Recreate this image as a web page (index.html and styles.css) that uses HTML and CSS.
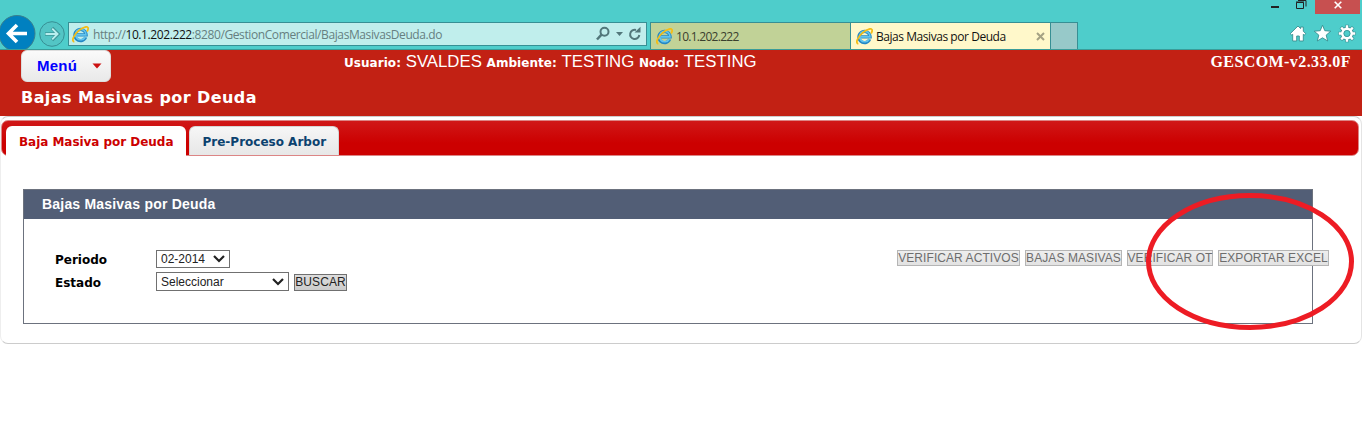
FILE: index.html
```html
<!DOCTYPE html>
<html lang="es">
<head>
<meta charset="utf-8">
<title>Bajas Masivas por Deuda</title>
<link rel="stylesheet" href="styles.css">
</head>
<body>
<svg class="defs" width="0" height="0" aria-hidden="true">
  <symbol id="ie" viewBox="0 0 16 16">
    <path d="M12.900 10.600A5.300 5.300 0 1 1 13.300 8.300H4.600" fill="none" stroke="#2387c4" stroke-width="3"/>
    <path d="M12.500 10.400A4.900 4.900 0 1 1 13.100 8.300H4.600" fill="none" stroke="#62c4ee" stroke-width="1.600"/>
    <path d="M2.200 14.900C-1 14.500 1.600 8 6.600 4.100 10.800.8 15-.3 15.200 2.100c.1 1-.4 2-1 3" fill="none" stroke="#f4bd16" stroke-width="1.700"/>
  </symbol>
</svg>
<header class="chrome">
  <div class="window-buttons">
    <svg class="win-icons" width="60" height="14" viewBox="0 0 60 14"><path d="M0 6h8v2H0z" fill="#222"/><path d="M25.500 2.500h7v6h-7zM25 2h8M27 .5h8v6" fill="none" stroke="#222"/></svg>
    <div class="win-close"><svg width="8" height="8" viewBox="0 0 8 8"><path d="M.7.7l6.600 6.600M7.300.7L.7 7.300" stroke="#fff" stroke-width="1.600"/></svg></div>
  </div>
  <div class="nav">
    <svg class="back" width="36" height="34" viewBox="0 0 36 34"><circle cx="17" cy="18.500" r="18" fill="#0080c0" stroke="#3a7f8c"/><path d="M27 18.500H9M17 10l-8.500 8.500L17 27" fill="none" stroke="#fff" stroke-width="3.600"/></svg>
    <svg class="forward" width="28" height="28" viewBox="0 0 28 28"><circle cx="14" cy="14" r="12.300" fill="#53c5c5" stroke="#378f94"/><path d="M7 14h13M14 8l6 6-6 6" fill="none" stroke="#3d9698" stroke-width="3.600"/><path d="M7.500 14h12M14.200 8.700l5.300 5.300-5.300 5.300" fill="none" stroke="#b8eeee" stroke-width="1.900"/></svg>
    <div class="address">
      <svg class="ie" width="17" height="17"><use href="#ie"/></svg>
      <span class="url">http://<b>10.1.202.222</b>:8280/GestionComercial/BajasMasivasDeuda.do</span>
      <svg class="address-tools" width="46" height="16" viewBox="0 0 46 16"><g fill="none" stroke="#52777a"><circle cx="8.500" cy="5.700" r="4" stroke-width="2"/><path d="M5.500 8.700L1 13.500" stroke-width="2.500"/><path d="M40 4A4.600 4.600 0 1 0 43.300 9" stroke-width="2"/></g><path d="M20 6h7l-3.500 4zM38.500 6.500h6V.8z" fill="#52777a"/></svg>
    </div>
    <div class="browser-tabs">
      <div class="browser-tab"><svg class="ie" width="17" height="17"><use href="#ie"/></svg><span class="bt1">10.1.202.222</span></div>
      <div class="browser-tab current"><svg class="ie" width="17" height="17"><use href="#ie"/></svg><span class="bt2">Bajas Masivas por Deuda</span><svg class="tab-x" width="9" height="9" viewBox="0 0 9 9"><path d="M1 1l7 7M8 1L1 8" stroke="#a5a284" stroke-width="2"/></svg></div>
      <div class="new-tab"></div>
    </div>
    <svg class="tools" width="68" height="20" viewBox="0 0 68 20">
      <g fill="#fff" stroke="#388e90" stroke-width=".9">
        <path d="M1.200 9.700L9 2l2.600 2.600V3h2.700v4.200l2.500 2.500-1.600 1.400-.9-.8V17h-4v-5H7.700v5h-4v-6.700l-.9.800z"/>
        <path d="M33.500 1.200l2.300 5.500 6 .5-4.600 3.900 1.500 5.900-5.200-3.200-5.200 3.200 1.500-5.900-4.600-3.900 6-.5z"/>
      </g>
      <g fill="none"><path d="M58 .8v17.400M49.300 9.500h17.400M51.800 3.300l12.400 12.400M64.200 3.300L51.800 15.700" stroke="#388e90" stroke-width="3.600"/><circle cx="58" cy="9.500" r="4.800" stroke="#388e90" stroke-width="3.800"/><path d="M58 1.300v16.400M49.800 9.500h16.400M52.200 3.700l11.600 11.600M63.800 3.700L52.200 15.300" stroke="#fff" stroke-width="2.400"/></g>
      <circle cx="58" cy="9.500" r="4.600" fill="#4ecdcb" stroke="#fff" stroke-width="2.600"/><circle cx="58" cy="9.500" r="3.100" fill="#4ecdcb" stroke="#388e90" stroke-width=".8"/>
    </svg>
  </div>
</header>
<section class="banner">
  <div class="banner-top">
    <div class="menu"><span>Menú</span><svg width="10" height="6" viewBox="0 0 10 6"><path d="M.5.5h9L5 5.500z" fill="#c11"/></svg></div>
    <p class="session"><b>Usuario:</b> <span>SVALDES</span> <b>Ambiente:</b> <span>TESTING</span> <b>Nodo:</b> <span>TESTING</span></p>
    <strong class="version">GESCOM-v2.33.0F</strong>
  </div>
  <h1>Bajas Masivas por Deuda</h1>
</section>
<main class="tabs">
  <div class="tab-bar">
    <div class="tab selected"><span>Baja Masiva por Deuda</span></div>
    <div class="tab"><span>Pre-Proceso Arbor</span></div>
  </div>
  <section class="panel">
    <h2><span>Bajas Masivas por Deuda</span></h2>
    <div class="panel-body">
      <form class="filters">
        <label>Periodo</label>
        <div class="field"><div class="select period"><span>02-2014</span><svg width="12" height="8" viewBox="0 0 12 8"><path d="M1 1l5 5 5-5" fill="none" stroke="#222" stroke-width="2.200"/></svg></div></div>
        <label>Estado</label>
        <div class="field"><div class="select state"><span>Seleccionar</span><svg width="12" height="8" viewBox="0 0 12 8"><path d="M1 1l5 5 5-5" fill="none" stroke="#222" stroke-width="2.200"/></svg></div><button type="button" class="btn search"><span>BUSCAR</span></button></div>
      </form>
      <div class="actions">
        <button type="button" class="btn off a1"><span>VERIFICAR ACTIVOS</span></button>
        <button type="button" class="btn off a2"><span>BAJAS MASIVAS</span></button>
        <button type="button" class="btn off a3"><span>VERIFICAR OT</span></button>
        <button type="button" class="btn off a4"><span>EXPORTAR EXCEL</span></button>
      </div>
    </div>
  </section>
  <svg class="highlight" width="212" height="142" viewBox="0 0 212 142"><ellipse cx="105" cy="70.500" rx="101.500" ry="66" fill="none" stroke="#ed1c24" stroke-width="5"/></svg>
</main>
</body>
</html>
```
FILE: styles.css
```css
* { box-sizing: border-box; }
body { margin: 0; height: 434px; overflow: hidden; background: #fff; font-family: "Liberation Sans", Arial, sans-serif; }
svg { display: block; flex: none; }
.defs { position: absolute; }
span, b, strong { white-space: nowrap; }

.chrome { height: 50px; background: #4ecdcb; border-bottom: 1px solid #3a9c99; overflow: hidden; }
.window-buttons { display: flex; justify-content: flex-end; height: 15px; padding-right: 2px; }
.win-icons { margin-right: -16px; }
.win-close { width: 45px; height: 14px; background: #c75050; display: flex; justify-content: center; padding-top: 1px; }
.nav { display: flex; height: 34px; font: 12px "Open Sans", "Noto Sans", sans-serif; }
.forward { margin: 5px 0 0 2px; }
.address { flex: 0 0 579px; height: 24px; margin: 7px 3px 0 2px; border: 1px solid #378f94; background: #c0eeec; display: flex; align-items: center; padding-left: 3px; color: #667f80; }
.url { margin-left: 4px; width: 350px; letter-spacing: -.4px; }
.url b { font-weight: 400; color: #111; }
.address-tools { margin-left: 153px; }
.browser-tabs { display: flex; margin-top: 7px; flex: 0 0 428px; }
.browser-tab { width: 200px; height: 27px; border: 1px solid #378f94; border-bottom: 0; border-right: 0; background: #c1d297; display: flex; align-items: center; padding-left: 5px; color: #3b402e; }
.browser-tab span { margin-left: 3px; }
.bt1 { letter-spacing: -.72px; }
.bt2 { letter-spacing: -.45px; }
.browser-tab.current { background: #fff8ca; color: #111; }
.tab-x { margin-left: auto; margin-right: 5px; }
.new-tab { width: 28px; height: 27px; border: 1px solid #378f94; border-bottom: 0; background: #97c9c9; }
.tools { margin: 9px 5px 0 auto; }

.banner { height: 66px; background: #c22114; color: #fff; }
.banner-top { display: flex; height: 36px; padding-left: 21px; }
.menu { width: 90px; height: 32px; border: 1px solid #ddd; border-radius: 6px; background: linear-gradient(#fafafa, #e9e9e9); display: flex; align-items: center; padding-left: 15px; color: #00f; font: bold 15px "Liberation Sans", sans-serif; }
.menu span { letter-spacing: .25px; padding-bottom: 2px; }
.menu svg { margin-left: 15px; }
.session { display: flex; align-items: baseline; gap: 4.700px; margin: 0 0 0 233px; line-height: 23px; font-size: 16.800px; }
.session b { font: bold 12px/23px "DejaVu Sans", sans-serif; letter-spacing: .05px; }
.version { margin-left: auto; margin-right: 11px; font: bold 16px/24px "Liberation Serif", serif; letter-spacing: .42px; }
h1 { margin: 0 0 0 21px; font: bold 16px/23px "DejaVu Sans", sans-serif; letter-spacing: .43px; }

.tabs { position: relative; height: 228px; border: 1px solid #ccc; border-left-color: #eee; border-right-color: #e4e4e4; border-radius: 8px; padding: 3px 2px 0 0; }
.tab-bar { height: 36px; border: 1px solid #dc8585; border-radius: 7px; background: linear-gradient(#d01818, #c00 65%); display: flex; align-items: flex-end; gap: 3px; padding-left: 4px; }
.tab { height: 29px; width: 150px; border: 1px solid #d5d5d5; border-bottom: 0; border-radius: 6px 6px 0 0; background: linear-gradient(#f6f6f6, #e7e7e7); padding-left: 12.500px; color: #0b426f; font: bold 12px/31px "DejaVu Sans", sans-serif; }
.tab.selected { width: 180px; height: 30px; margin-bottom: -1px; border: 0; background: #fff; color: #c00; line-height: 33px; padding-left: 13px; letter-spacing: -.04px; }
.panel { width: 1290px; height: 135px; margin: 33px 0 0 22px; border: 1px solid #6c727e; }
h2 { margin: 0; height: 29px; padding-left: 18px; background: #525e76; color: #fff; font: bold 14px/29px "Liberation Sans", sans-serif; letter-spacing: .2px; }
.panel-body { display: flex; padding-top: 28px; }
.filters { display: grid; grid-template-columns: 101px 200px; grid-template-rows: 23px 23px; margin-left: 31px; align-items: center; }
.filters label { font: bold 12px/16px "DejaVu Sans", sans-serif; padding-top: 3px; }
.field { display: flex; align-items: center; gap: 5px; height: 23px; }
.select { height: 19px; border: 1px solid #707070; background: #fff; display: flex; align-items: center; justify-content: space-between; padding: 0 4px; font-size: 12px; color: #222; }
.period { width: 74px; height: 18px; }
.state { width: 133px; }
.btn { flex: none; height: 17px; padding: 0; border: 1px solid #707070; background: linear-gradient(#ddd, #ccc); color: #222; font: 12px/15px "Liberation Sans", sans-serif; letter-spacing: .08px; display: flex; justify-content: center; }
.search { width: 53px; margin-top: 1px; }
.actions { display: flex; gap: 5px; margin: 3px 0 0 541px; }
.off { height: 16px; line-height: 14px; color: #6d6d6d; border-color: #b5b5b5; background: linear-gradient(#eee, #e2e2e2); }
.a1 { width: 123px; }
.a2 { width: 97px; }
.a3 { width: 86px; }
.a4 { width: 111px; }
.highlight { position: absolute; left: 1144px; top: 74px; }
```
